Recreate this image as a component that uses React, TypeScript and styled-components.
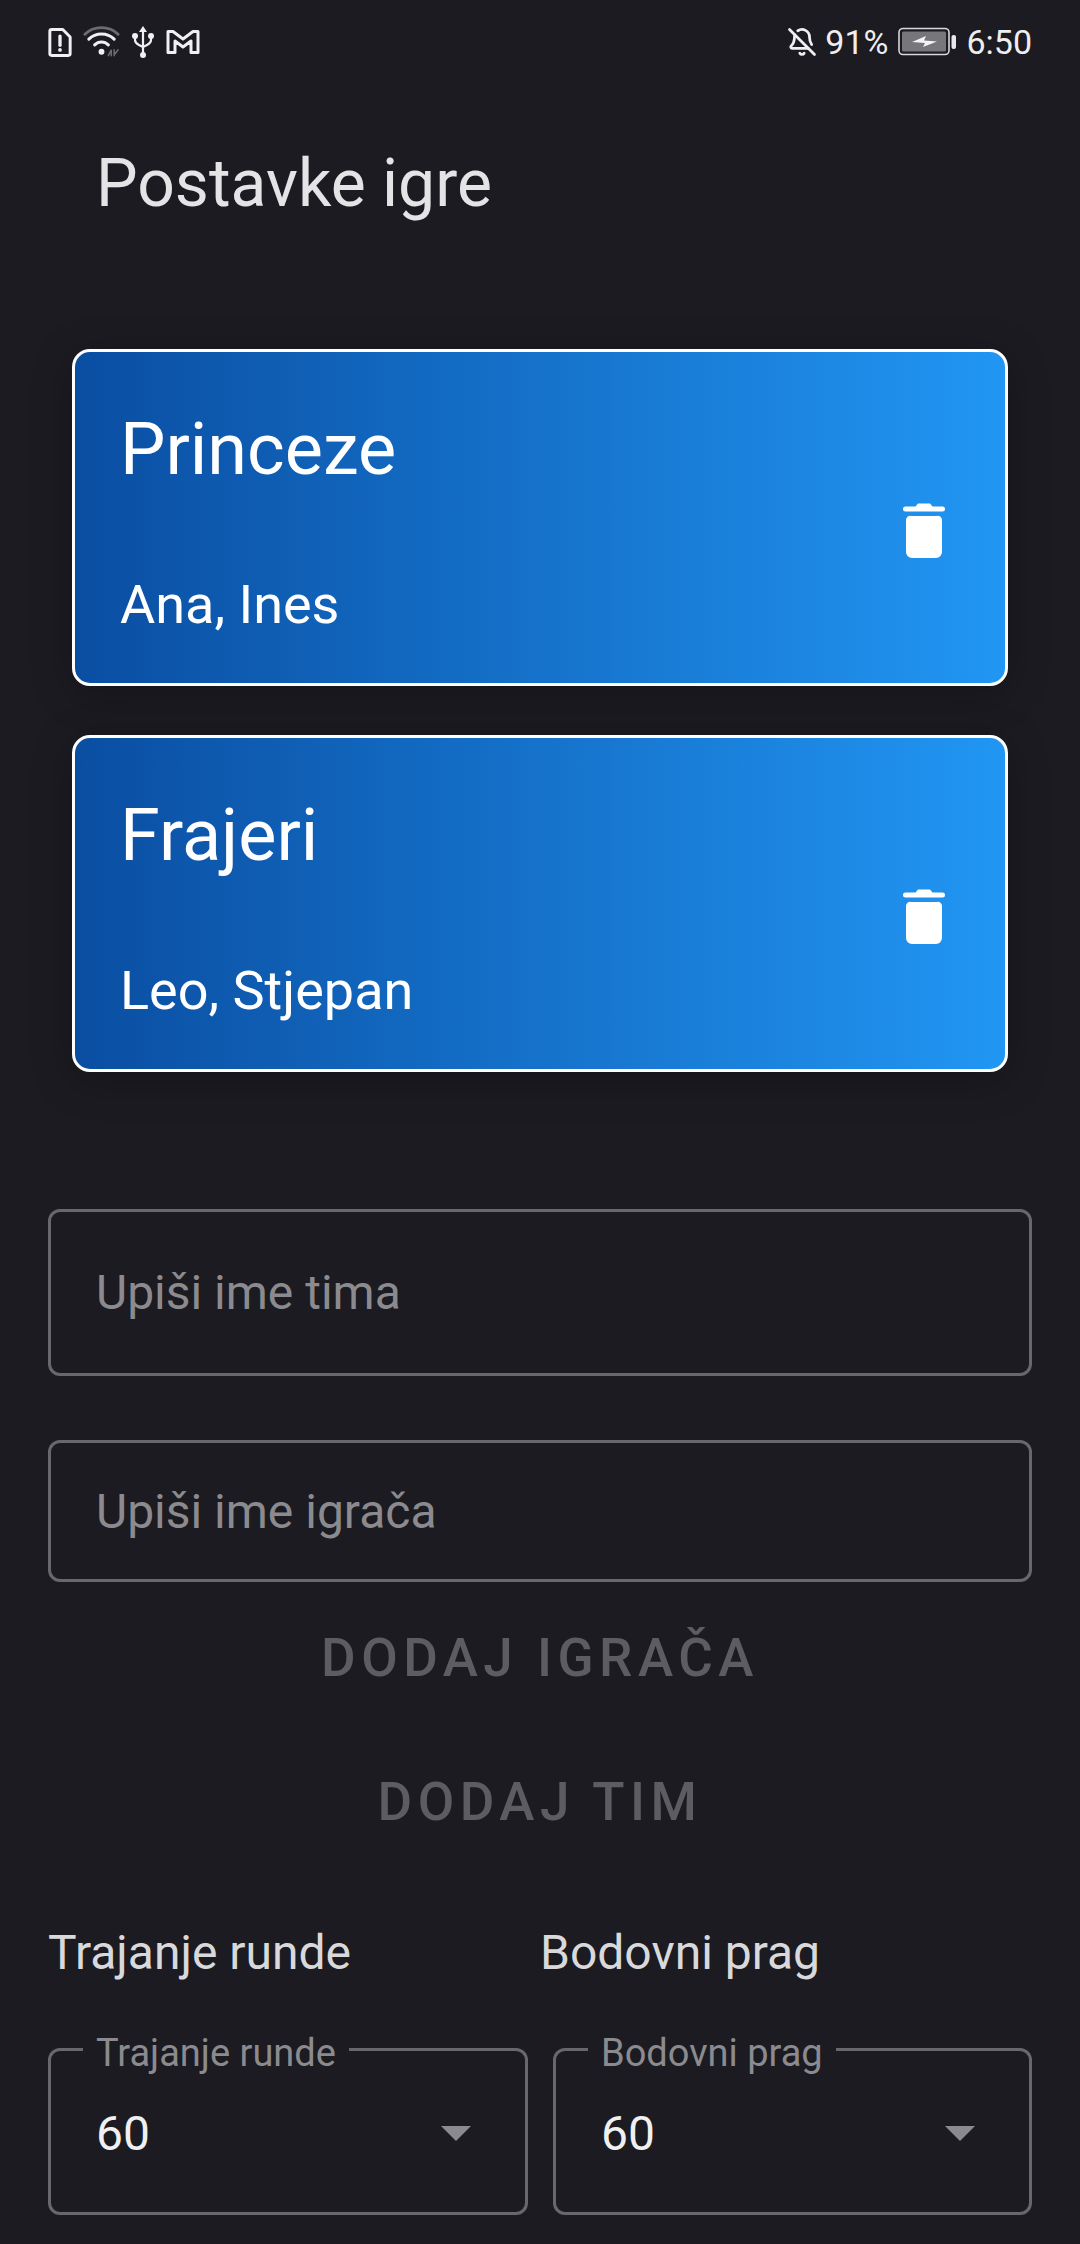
import React from 'react';
import styled, { createGlobalStyle } from 'styled-components';
import { BellOff } from 'lucide-react';

const GlobalStyle = createGlobalStyle`
  html, body {
    margin: 0;
    padding: 0;
    background: #1b1b21;
  }
  * {
    box-sizing: border-box;
  }
`;

const Screen = styled.div`
  width: 1080px;
  height: 2244px;
  overflow: hidden;
  background: #1b1b21;
  font-family: Roboto, sans-serif;
  color: #fff;
`;

const StatusBar = styled.div`
  height: 84px;
  padding: 0 48px;
  display: flex;
  align-items: center;
  justify-content: space-between;
`;

const StatusGroup = styled.div<{ $gap: number }>`
  display: flex;
  align-items: center;
  gap: ${(p) => p.$gap}px;
`;

const StatusText = styled.span`
  font-size: 34px;
  color: #eeeeef;
`;

const Title = styled.h1`
  margin: 0;
  padding: 64px 0 0 96px;
  height: 181px;
  font-size: 66px;
  line-height: 72px;
  font-weight: 400;
  color: #e4e4e6;
`;

const TeamList = styled.div`
  padding: 84px 72px 0;
  display: flex;
  flex-direction: column;
  gap: 49px;
`;

const TeamCard = styled.div`
  height: 337px;
  border: 3px solid #fff;
  border-radius: 18px;
  background: linear-gradient(90deg, #0a4ea2, #2196f3);
  box-shadow: 0 8px 40px rgba(0, 0, 0, 0.25);
  padding: 0 60px 0 45px;
  display: flex;
  align-items: center;
  justify-content: space-between;
`;

const TeamInfo = styled.div`
  padding-top: 8px;
  display: flex;
  flex-direction: column;
`;

const TeamName = styled.div`
  font-size: 72px;
  line-height: 84px;
  margin-bottom: 83px;
`;

const TeamPlayers = styled.div`
  font-size: 54px;
  line-height: 60px;
`;

const DeleteButton = styled.div`
  margin-top: 26px;
  display: flex;
`;

const Form = styled.div`
  padding: 137px 48px 0;
  display: flex;
  flex-direction: column;
`;

const Input = styled.div<{ $height: number; $gap: number }>`
  height: ${(p) => p.$height}px;
  margin-bottom: ${(p) => p.$gap}px;
  border: 3px solid #67676c;
  border-radius: 12px;
  padding: 0 45px;
  display: flex;
  align-items: center;
  font-size: 48px;
  color: #8b8b8f;
`;

const TextButton = styled.div<{ $height: number }>`
  height: ${(p) => p.$height}px;
  display: flex;
  align-items: center;
  justify-content: center;
  font-size: 53px;
  font-weight: 500;
  letter-spacing: 5.5px;
  color: #5c5c61;
`;

const LabelRow = styled.div`
  margin-top: 55px;
  display: grid;
  grid-template-columns: 492px 1fr;
`;

const SectionLabel = styled.div`
  font-size: 48px;
  line-height: 56px;
  color: #d9d9db;
`;

const SelectRowGrid = styled.div`
  margin-top: 44px;
  display: grid;
  grid-template-columns: 480px 479px;
  column-gap: 25px;
`;

const SelectBox = styled.fieldset`
  margin: 0;
  height: 190px;
  padding: 0 45px;
  border: 3px solid #67676c;
  border-radius: 12px;
  min-width: 0;
`;

const SelectLegend = styled.legend`
  padding: 8px 13px 0;
  margin-left: -13px;
  font-size: 38px;
  line-height: 40px;
  color: #8b8b8f;
`;

const SelectValue = styled.div`
  height: 120px;
  display: flex;
  align-items: center;
  justify-content: space-between;
  font-size: 48px;
  color: #f0f0f2;
`;

const Caret = styled.span`
  width: 0;
  height: 0;
  margin-right: 9px;
  border-left: 15px solid transparent;
  border-right: 15px solid transparent;
  border-top: 15px solid #8b8b8f;
`;

const TrashIcon = () => (
  <svg width="42" height="55" viewBox="0 0 42 55" fill="#fff">
    <path d="M2.5 3.5H12.5L15 0.5H27L29.5 3.5H39.5A2.4 2.4 0 0 1 39.5 8.5H2.5A2.4 2.4 0 0 1 2.5 3.5Z" />
    <path d="M8 13H34A4 4 0 0 1 39 17V49A6 6 0 0 1 33 55H9A6 6 0 0 1 3 49V17A4 4 0 0 1 8 13Z" />
  </svg>
);

const SimAlertIcon = () => (
  <svg width="24" height="31" viewBox="0 0 26 32" fill="none" stroke="#f0f0f2" strokeWidth="3.2">
    <path d="M4 2H16L24 10V28A2 2 0 0 1 22 30H4A2 2 0 0 1 2 28V4A2 2 0 0 1 4 2Z" strokeLinejoin="round" />
    <path d="M13 9V19" strokeLinecap="round" strokeWidth="3.6" />
    <circle cx="13" cy="24" r="2" fill="#f0f0f2" stroke="none" />
  </svg>
);

const WifiIcon = () => (
  <svg width="37" height="32" viewBox="0 0 38 32" fill="none" strokeLinecap="round">
    <path d="M2 8C11 -1 27 -1 36 8" stroke="#6b6b70" strokeWidth="3" />
    <path d="M6 13C13 6 25 6 32 13" stroke="#f0f0f2" strokeWidth="3.2" />
    <path d="M12 19C16 15 22 15 26 19" stroke="#f0f0f2" strokeWidth="3.2" />
    <circle cx="19" cy="26" r="3" fill="#f0f0f2" />
    <path d="M26 30L29 24V30M32 24V30M36 24L33 28" stroke="#6b6b70" strokeWidth="1.6" />
  </svg>
);

const UsbIcon = () => (
  <svg width="24" height="34" viewBox="0 0 24 34" fill="#f0f0f2">
    <path d="M12 1L16 7H8Z" />
    <path d="M12 5V30M4 11V15C4 18 6 19 8 20L12 22L16 20C18 19 20 18 20 15V11" fill="none" stroke="#f0f0f2" strokeWidth="2.2" />
    <circle cx="4" cy="11" r="3" />
    <circle cx="20" cy="11" r="3" />
    <circle cx="12" cy="30" r="3" />
  </svg>
);

const MailIcon = () => (
  <svg width="34" height="28" viewBox="0 0 34 28" fill="none" stroke="#f0f0f2" strokeWidth="3" strokeLinejoin="round">
    <path d="M2 3.5V24.5H9V13L17 19L25 13V24.5H32V3.5H27L17 11L7 3.5Z" />
  </svg>
);

const BatteryIcon = () => (
  <svg width="62" height="30" viewBox="-2 0 62 30" fill="none">
    <rect x="1" y="1.5" width="50" height="26" rx="4" stroke="#d8d8da" strokeWidth="1.6" />
    <rect x="4" y="4.5" width="44" height="20" rx="1.5" fill="#77777b" />
    <path d="M14 15L28 9L26 13.5L39 14.5L25 20L27 16Z" fill="#f4f4f5" />
    <rect x="53.5" y="8" width="4.5" height="14" rx="2" fill="#e8e8ea" />
  </svg>
);

const teams = [
  { name: 'Princeze', players: 'Ana, Ines' },
  { name: 'Frajeri', players: 'Leo, Stjepan' },
];

const selects = ['Trajanje runde', 'Bodovni prag'];

export default function App() {
  return (
    <Screen>
      <GlobalStyle />
      <StatusBar>
        <StatusGroup $gap={11}>
          <SimAlertIcon />
          <WifiIcon />
          <UsbIcon />
          <MailIcon />
        </StatusGroup>
        <StatusGroup $gap={8}>
          <BellOff size={30} color="#f0f0f2" strokeWidth={2.2} />
          <StatusText>91%</StatusText>
          <BatteryIcon />
          <StatusText>6:50</StatusText>
        </StatusGroup>
      </StatusBar>
      <Title>Postavke igre</Title>
      <TeamList>
        {teams.map((team) => (
          <TeamCard key={team.name}>
            <TeamInfo>
              <TeamName>{team.name}</TeamName>
              <TeamPlayers>{team.players}</TeamPlayers>
            </TeamInfo>
            <DeleteButton>
              <TrashIcon />
            </DeleteButton>
          </TeamCard>
        ))}
      </TeamList>
      <Form>
        <Input $height={167} $gap={64}>Upiši ime tima</Input>
        <Input $height={142} $gap={0}>Upiši ime igrača</Input>
        <TextButton $height={152}>DODAJ IGRAČA</TextButton>
        <TextButton $height={136}>DODAJ TIM</TextButton>
        <LabelRow>
          {selects.map((label) => (
            <SectionLabel key={label}>{label}</SectionLabel>
          ))}
        </LabelRow>
        <SelectRowGrid>
          {selects.map((label) => (
            <SelectBox key={label}>
              <SelectLegend>{label}</SelectLegend>
              <SelectValue>
                60
                <Caret />
              </SelectValue>
            </SelectBox>
          ))}
        </SelectRowGrid>
      </Form>
    </Screen>
  );
}
